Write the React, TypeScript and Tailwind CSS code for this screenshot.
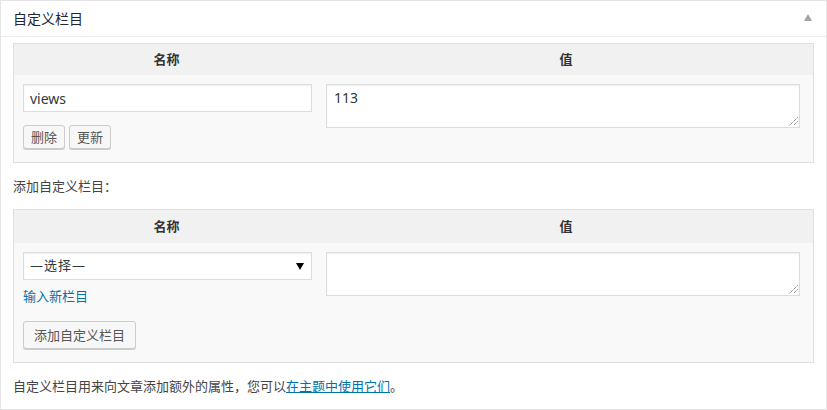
import React from "react";

const font = { fontFamily: '"Noto Sans", "Noto Sans CJK SC", sans-serif' };

function Btn({ children, h }: { children: React.ReactNode; h: string }) {
  return (
    <button
      className={`${h} rounded-[3px] border border-[#cccccc] bg-[#f7f7f7] text-[13px] leading-none text-[#555555] shadow-[0_1px_0_#cccccc]`}
    >
      {children}
    </button>
  );
}

function HeadRow({ h }: { h: string }) {
  return (
    <div className={`grid grid-cols-[305px_1fr] ${h} bg-[#f1f1f1] items-center text-[13px] font-bold text-[#333333]`}>
      <div className="text-center">名称</div>
      <div className="text-center">值</div>
    </div>
  );
}

function Grip() {
  return (
    <svg className="absolute right-[1px] bottom-[1px]" width="10" height="10" viewBox="0 0 10 10">
      <path d="M9.5 1.5L1.5 9.5M9.5 5.5L5.5 9.5" stroke="#555" strokeWidth="1" strokeDasharray="1 1" fill="none" />
    </svg>
  );
}

export default function App() {
  return (
    <div className="w-[827px] h-[410px] bg-white" style={font}>
      <div className="h-[410px] border border-[#e5e5e5] bg-white flex flex-col">
        <div className="h-[36px] border-b border-[#eeeeee] flex items-center justify-between pl-[12px] pr-[14px] shrink-0">
          <span className="text-[14px] text-[#23282d]">自定义栏目</span>
          <span className="w-0 h-0 border-l-[4px] border-r-[4px] border-b-[7px] border-l-transparent border-r-transparent border-b-[#a0a5aa] mt-[-2px]" />
        </div>
        <div className="px-[12px] pt-[6px]">
          {/* Table 1 */}
          <div className="border border-[#dfdfdf]">
            <HeadRow h="h-[31px]" />
            <div className="grid grid-cols-[305px_1fr] bg-[#f9f9f9] pt-[9px] pb-[13px]">
              <div className="pl-[9px] pr-[7px] flex flex-col">
                <div className="h-[28px] border border-[#dddddd] bg-white shadow-[inset_0_1px_2px_rgba(0,0,0,0.07)] flex items-center pl-[6px] text-[14px] text-[#32373c]">
                  views
                </div>
                <div className="flex gap-[4px] mt-[13px]">
                  <Btn h="h-[24px] px-[7px]">删除</Btn>
                  <Btn h="h-[24px] px-[7px]">更新</Btn>
                </div>
              </div>
              <div className="pl-[7px] pr-[13px]">
                <div className="relative h-[44px] border border-[#dddddd] bg-white shadow-[inset_0_1px_2px_rgba(0,0,0,0.07)] pl-[7px] pt-[3px] text-[14px] text-[#32373c] leading-[20px]">
                  113
                  <Grip />
                </div>
              </div>
            </div>
          </div>

          <div className="mt-[13px] h-[22px] flex items-center text-[13px] text-[#444444]">添加自定义栏目：</div>

          {/* Table 2 */}
          <div className="mt-[11px] border border-[#dfdfdf]">
            <HeadRow h="h-[33px]" />
            <div className="grid grid-cols-[305px_1fr] bg-[#f9f9f9] pt-[9px] pb-[13px]">
              <div className="pl-[9px] pr-[7px] flex flex-col">
                <div className="h-[28px] border border-[#dddddd] bg-white shadow-[inset_0_1px_2px_rgba(0,0,0,0.07)] flex items-center justify-between pl-[6px] pr-[7px] text-[13px] text-[#32373c]">
                  <span className="tracking-[1px]">—选择—</span>
                  <span className="w-0 h-0 border-l-[4px] border-r-[4px] border-t-[7px] border-l-transparent border-r-transparent border-t-[#000000]" />
                </div>
                <div className="mt-[6px] h-[22px] flex items-center text-[13px] text-[#0073aa]">输入新栏目</div>
                <div className="mt-[13px]">
                  <Btn h="h-[28px] px-[10px]">添加自定义栏目</Btn>
                </div>
              </div>
              <div className="pl-[7px] pr-[13px]">
                <div className="relative h-[44px] border border-[#dddddd] bg-white shadow-[inset_0_1px_2px_rgba(0,0,0,0.07)]">
                  <Grip />
                </div>
              </div>
            </div>
          </div>

          <div className="mt-[13px] h-[22px] flex items-center text-[13px] text-[#444444]">
            自定义栏目用来向文章添加额外的属性，您可以<span className="text-[#0073aa] underline">在主题中使用它们</span>。
          </div>
        </div>
      </div>
    </div>
  );
}
